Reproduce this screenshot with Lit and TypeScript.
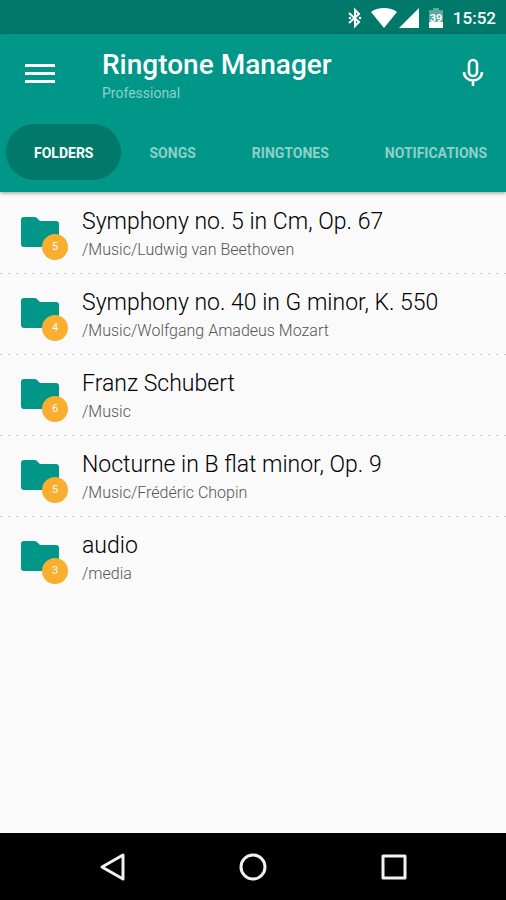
import { LitElement, html, css } from "lit";
import { customElement, state } from "lit/decorators.js";
import { classMap } from "lit/directives/class-map.js";

interface Folder {
  name: string;
  path: string;
  count: number;
}

const TABS = ["Folders", "Songs", "Ringtones", "Notifications"];

const FOLDERS: Folder[] = [
  { name: "Symphony no. 5 in Cm, Op. 67", path: "/Music/Ludwig van Beethoven", count: 5 },
  { name: "Symphony no. 40 in G minor, K. 550", path: "/Music/Wolfgang Amadeus Mozart", count: 4 },
  { name: "Franz Schubert", path: "/Music", count: 6 },
  { name: "Nocturne in B flat minor, Op. 9", path: "/Music/Frédéric Chopin", count: 5 },
  { name: "audio", path: "/media", count: 3 },
];

@customElement("status-bar")
class StatusBar extends LitElement {
  static styles = css`
    :host {
      display: flex;
      align-items: center;
      justify-content: flex-end;
      height: 34px;
      padding: 2px 10px 0;
      box-sizing: border-box;
      background: #00796b;
      color: #fff;
      font-size: 17px;
      font-weight: 500;
      line-height: 24px;
    }
    svg {
      display: block;
      fill: #fff;
    }
    .bluetooth { margin-right: 8px; }
    .wifi { margin-right: 2px; }
    .signal { margin-right: 10px; }
    .battery { margin-right: 10px; }
    .rune {
      fill: none;
      stroke: #fff;
      stroke-width: 2;
    }
    .level { font: 700 11px Roboto, sans-serif; }
    .dim { fill: #5aa89e; }
  `;

  render() {
    return html`
      <svg class="bluetooth" width="16" height="22" viewBox="0 0 16 22" aria-label="Bluetooth">
        <path class="rune" d="M2 6l10 9-4 4V3l4 4-10 9" />
        <circle cx="3" cy="11" r="1.300" /><circle cx="13" cy="11" r="1.300" />
      </svg>
      <svg class="wifi" width="26" height="20" viewBox="0 0 26 20" aria-label="Wi-Fi">
        <path d="M13 20L0 4C4 1 8 0 13 0s9 1 13 4z" />
      </svg>
      <svg class="signal" width="20" height="20" viewBox="0 0 20 20" aria-label="Mobile signal">
        <path d="M20 0v20H0z" />
      </svg>
      <svg class="battery" width="14" height="20" viewBox="0 0 14 20" aria-label="Battery">
        <path class="dim" d="M4 0h6v2h4v13H0V2h4z" />
        <path d="M0 14h14v6H0z" />
        <text class="level" x="7" y="14" text-anchor="middle">39</text>
      </svg>
      <span>15:52</span>
    `;
  }
}

@customElement("folder-row")
class FolderRow extends LitElement {
  static properties = { folder: { attribute: false } };
  declare folder: Folder;

  static styles = css`
    :host { display: block; }
    .row {
      display: flex;
      align-items: flex-start;
      gap: 14px;
      width: 100%;
      height: 80px;
      padding: 12px 20px 0;
      border: 0;
      background: none;
      box-sizing: border-box;
      font: inherit;
      text-align: left;
    }
    .icon {
      position: relative;
      flex: none;
      width: 48px;
      height: 56px;
    }
    .icon svg {
      display: block;
      margin-top: 12px;
      fill: #009688;
    }
    .count {
      position: absolute;
      right: 0;
      bottom: 1px;
      width: 26px;
      height: 26px;
      border-radius: 50%;
      background: #f9ae30;
      color: #fff;
      font-size: 11px;
      line-height: 26px;
      text-align: center;
    }
    .text { min-width: 0; }
    .name, .path {
      display: block;
      overflow: hidden;
      white-space: nowrap;
      text-overflow: ellipsis;
    }
    .name {
      color: #000;
      font-size: 23px;
      font-weight: 300;
      line-height: 34px;
    }
    .path {
      color: #555;
      font-size: 16px;
      font-weight: 300;
      line-height: 22px;
    }
  `;

  render() {
    const { name, path, count } = this.folder;
    return html`
      <button class="row">
        <span class="icon">
          <svg width="40" height="32" viewBox="0 0 40 32" aria-hidden="true">
            <path d="M4 0h10q2 0 3 1l3 3h16q3 0 3 3v20q0 3-3 3H4q-3 0-3-3V3q0-3 3-3z" />
          </svg>
          <span class="count">${count}</span>
        </span>
        <span class="text">
          <span class="name">${name}</span>
          <span class="path">${path}</span>
        </span>
      </button>
    `;
  }
}

@customElement("app-root")
class AppRoot extends LitElement {
  @state() private selected = 0;

  static styles = css`
    :host {
      display: flex;
      flex-direction: column;
      min-height: 100vh;
      background: #fafafa;
      font-family: Roboto, sans-serif;
    }
    button {
      border: 0;
      padding: 0;
      background: none;
      font: inherit;
      color: inherit;
    }
    svg { display: block; }
    header {
      background: #009688;
      color: #fff;
      box-shadow: 0 1px 4px rgba(0, 0, 0, 0.4);
      z-index: 1;
    }
    .toolbar {
      display: flex;
      align-items: center;
      height: 78px;
      padding: 0 20px 0 24px;
    }
    .titles {
      flex: 1;
      padding: 4px 0 0 46px;
    }
    h1 {
      margin: 0;
      font-size: 28px;
      font-weight: 500;
      line-height: 36px;
    }
    .subtitle {
      margin: 0;
      color: #8fd0c9;
      font-size: 14px;
      line-height: 20px;
    }
    .tabs {
      display: flex;
      height: 80px;
      padding: 12px 6px;
      box-sizing: border-box;
      overflow: hidden;
    }
    .tab {
      flex: none;
      height: 56px;
      padding: 2px 28px 0;
      border-radius: 28px;
      color: #8fd0c9;
      font-size: 14px;
      font-weight: 700;
      text-transform: uppercase;
    }
    .tab.active {
      background: #00796b;
      color: #fff;
    }
    main { flex: 1; }
    ul {
      margin: 0;
      padding: 1px 0 0;
      list-style: none;
    }
    li + li::before {
      content: "";
      display: block;
      height: 1px;
      background: repeating-linear-gradient(90deg, #c8c8c8 0 2px, transparent 2px 8px);
    }
    .navbar {
      display: flex;
      justify-content: center;
      align-items: center;
      gap: 100px;
      height: 67px;
      background: #000;
    }
    .navbar svg {
      fill: none;
      stroke: #f2f2f2;
      stroke-width: 3;
      stroke-linejoin: round;
    }
  `;

  render() {
    return html`
      <status-bar></status-bar>
      <header>
        <div class="toolbar">
          <button aria-label="Menu">
            <svg width="32" height="24" viewBox="0 0 32 24" fill="#fff">
              <path d="M1 3h30v3H1zM1 11h30v3H1zM1 19h30v3H1z" />
            </svg>
          </button>
          <div class="titles">
            <h1>Ringtone Manager</h1>
            <p class="subtitle">Professional</p>
          </div>
          <button aria-label="Voice search">
            <svg width="26" height="30" viewBox="0 0 26 30" fill="none" stroke="#fff" stroke-width="2.6">
              <rect x="9" y="2" width="8" height="16" rx="4" />
              <path d="M4 14c0 5 4 8.500 9 8.500s9-3.500 9-8.500M13 22v6" />
            </svg>
          </button>
        </div>
        <nav class="tabs" role="tablist">
          ${TABS.map(
            (label, i) => html`
              <button
                role="tab"
                aria-selected=${i === this.selected}
                class=${classMap({ tab: true, active: i === this.selected })}
                @click=${() => (this.selected = i)}
              >${label}</button>
            `
          )}
        </nav>
      </header>
      <main>
        <ul>
          ${FOLDERS.map((f) => html`<li><folder-row .folder=${f}></folder-row></li>`)}
        </ul>
      </main>
      <nav class="navbar">
        <button aria-label="Back">
          <svg width="40" height="32" viewBox="0 0 40 32"><path d="M30 4v24L9 16z" /></svg>
        </button>
        <button aria-label="Home">
          <svg width="40" height="32" viewBox="0 0 40 32"><circle cx="20" cy="16" r="12" /></svg>
        </button>
        <button aria-label="Overview">
          <svg width="40" height="32" viewBox="0 0 40 32"><rect x="10" y="5" width="22" height="22" /></svg>
        </button>
      </nav>
    `;
  }
}
